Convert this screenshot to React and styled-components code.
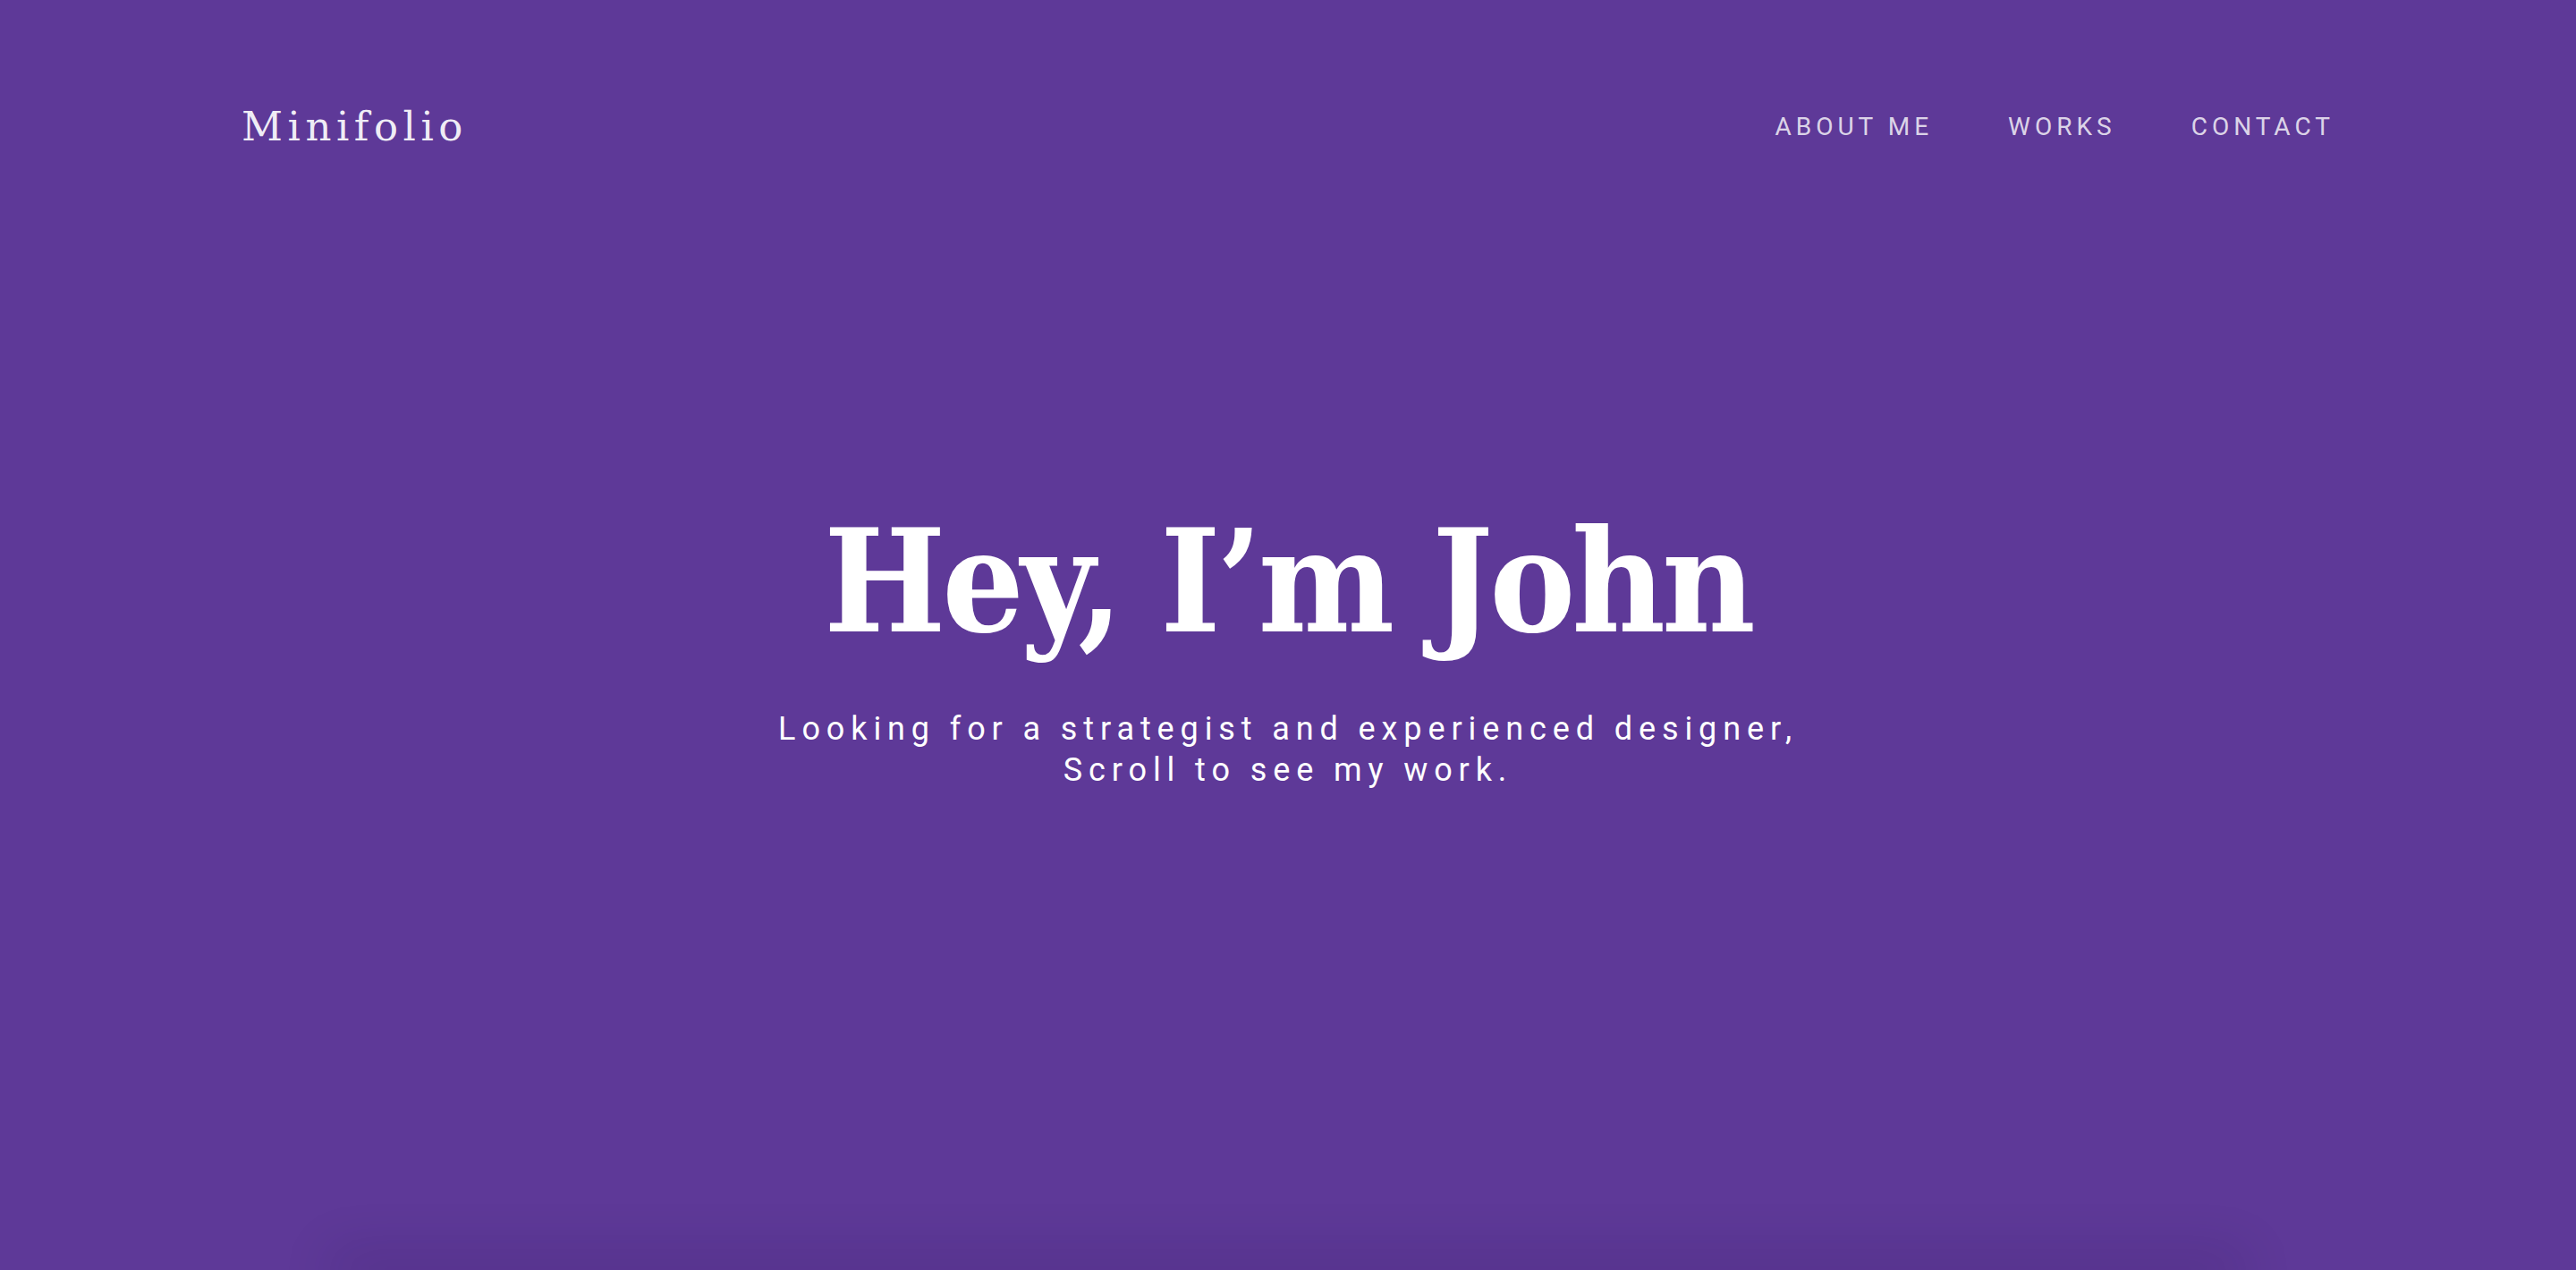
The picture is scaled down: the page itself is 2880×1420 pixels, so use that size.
import React from "react";
import styled, { createGlobalStyle } from "styled-components";

const Global = createGlobalStyle`
  html, body { margin: 0; padding: 0; }
  body { background: #5e3998; }
  * { box-sizing: border-box; }
`;

const Page = styled.div`
  height: 1420px;
  overflow: hidden;
  background: #5e3998;
  display: flex;
  flex-direction: column;
`;

const Header = styled.header`
  width: 2340px;
  height: 282px;
  margin: 0 auto;
  display: flex;
  align-items: center;
  justify-content: space-between;
  flex-shrink: 0;
`;

const Logo = styled.a`
  font-family: "DejaVu Serif", "Liberation Serif", serif;
  font-size: 45px;
  letter-spacing: 5.5px;
  color: rgba(255, 255, 255, 0.92);
  text-decoration: none;
`;

const Nav = styled.nav`
  display: flex;
  gap: 84px;
`;

const NavLink = styled.a`
  font-family: Roboto, "Liberation Sans", sans-serif;
  font-size: 28px;
  letter-spacing: 5px;
  text-transform: uppercase;
  color: rgba(255, 255, 255, 0.8);
  text-decoration: none;
`;

const Hero = styled.section`
  flex: 1;
  display: flex;
  flex-direction: column;
  align-items: center;
  padding-top: 288px;
`;

const Title = styled.h1`
  margin: 0;
  font-family: "DejaVu Serif Condensed", "DejaVu Serif", "Liberation Serif", serif;
  font-stretch: condensed;
  font-weight: 700;
  font-size: 160px;
  line-height: 1;
  letter-spacing: -4px;
  color: #ffffff;
`;

const Subtitle = styled.p`
  margin: 62px 0 0;
  font-family: Roboto, "Liberation Sans", sans-serif;
  font-size: 36px;
  line-height: 46px;
  letter-spacing: 6.9px;
  text-align: center;
  color: #ffffff;
`;

const CardPeek = styled.div`
  width: 2100px;
  height: 0;
  margin: 0 auto;
  flex-shrink: 0;
  box-shadow: 0 0 60px 20px rgba(20, 5, 50, 0.14);
`;

export default function App() {
  return (
    <>
      <Global />
      <Page>
        <Header>
          <Logo href="#">Minifolio</Logo>
          <Nav>
            <NavLink href="#">About me</NavLink>
            <NavLink href="#">Works</NavLink>
            <NavLink href="#">Contact</NavLink>
          </Nav>
        </Header>
        <Hero>
          <Title>Hey, I’m John</Title>
          <Subtitle>
            Looking for a strategist and experienced designer,
            <br />
            Scroll to see my work.
          </Subtitle>
        </Hero>
        <CardPeek />
      </Page>
    </>
  );
}
